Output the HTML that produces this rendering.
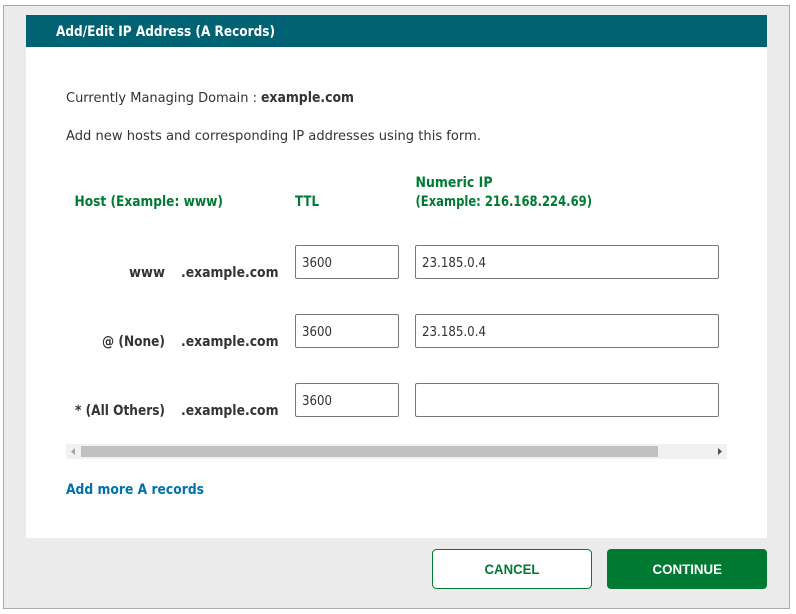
<!DOCTYPE html>
<html lang="en">
<head>
<meta charset="utf-8">
<title>Add/Edit IP Address</title>
<style>
html,body{margin:0;padding:0;width:796px;height:614px;background:#fff;overflow:hidden}
svg{display:block}
text{font-family:"DejaVu Sans","Liberation Sans",sans-serif;font-size:13.6px;fill:#333;white-space:pre}
.b{font-weight:700;font-size:13.8px}
.g{fill:#007a33;font-weight:700;font-size:13.8px}
.w{fill:#fff;font-weight:700;font-size:13.8px}
.l{fill:#0071ad;font-weight:700;font-size:13.8px}
.i{fill:#333;font-size:13px}
.btn{font-family:"Liberation Sans",sans-serif;font-weight:700;font-size:13.5px}
rect.f{fill:#fff;stroke:#777;stroke-width:1}
</style>
</head>
<body>
<svg width="796" height="614" viewBox="0 0 796 614" xmlns="http://www.w3.org/2000/svg">
<rect x="3.5" y="5.5" width="786" height="603" fill="#ebebeb" stroke="#aaa"/>
<rect x="26" y="47" width="741" height="491" fill="#fff"/>
<rect x="26" y="15" width="741" height="32" fill="#006272"/>
<text class="w" x="56" y="36" textLength="219" lengthAdjust="spacingAndGlyphs">Add/Edit IP Address (A Records)</text>

<text x="66" y="102" textLength="191" lengthAdjust="spacingAndGlyphs">Currently Managing Domain :</text>
<text class="b" x="261" y="102" textLength="93" lengthAdjust="spacingAndGlyphs">example.com</text>
<text x="66" y="140" textLength="415" lengthAdjust="spacingAndGlyphs">Add new hosts and corresponding IP addresses using this form.</text>

<text class="g" x="74.5" y="206" textLength="148.5" lengthAdjust="spacingAndGlyphs">Host (Example: www)</text>
<text class="g" x="295" y="206" textLength="24" lengthAdjust="spacingAndGlyphs">TTL</text>
<text class="g" x="415.5" y="187" textLength="77" lengthAdjust="spacingAndGlyphs">Numeric IP</text>
<text class="g" x="415.5" y="206" textLength="176.5" lengthAdjust="spacingAndGlyphs">(Example: 216.168.224.69)</text>

<text class="b" x="129" y="277" textLength="36" lengthAdjust="spacingAndGlyphs">www</text>
<text class="b" x="181" y="277" textLength="97.5" lengthAdjust="spacingAndGlyphs">.example.com</text>
<rect class="f" x="295.5" y="245.5" width="103" height="33" rx="1.5"/>
<text class="i" x="302" y="267" textLength="30" lengthAdjust="spacingAndGlyphs">3600</text>
<rect class="f" x="415.5" y="245.5" width="303" height="33" rx="1.5"/>
<text class="i" x="422" y="267" textLength="64" lengthAdjust="spacingAndGlyphs">23.185.0.4</text>

<text class="b" x="102" y="346" textLength="63" lengthAdjust="spacingAndGlyphs">@ (None)</text>
<text class="b" x="181" y="346" textLength="97.5" lengthAdjust="spacingAndGlyphs">.example.com</text>
<rect class="f" x="295.5" y="314.5" width="103" height="33" rx="1.5"/>
<text class="i" x="302" y="336" textLength="30" lengthAdjust="spacingAndGlyphs">3600</text>
<rect class="f" x="415.5" y="314.5" width="303" height="33" rx="1.5"/>
<text class="i" x="422" y="336" textLength="64" lengthAdjust="spacingAndGlyphs">23.185.0.4</text>

<text class="b" x="75" y="415" textLength="90" lengthAdjust="spacingAndGlyphs">* (All Others)</text>
<text class="b" x="181" y="415" textLength="97.5" lengthAdjust="spacingAndGlyphs">.example.com</text>
<rect class="f" x="295.5" y="383.5" width="103" height="33" rx="1.5"/>
<text class="i" x="302" y="405" textLength="30" lengthAdjust="spacingAndGlyphs">3600</text>
<rect class="f" x="415.5" y="383.5" width="303" height="33" rx="1.5"/>

<rect x="66" y="444" width="661" height="15" fill="#f1f1f1"/>
<rect x="81" y="446" width="577" height="11" fill="#c1c1c1"/>
<path d="M71 451.5L75 448V455Z" fill="#a3a3a3"/>
<path d="M722 451.5L718 448V455Z" fill="#505050"/>

<text class="l" x="66" y="494" textLength="138" lengthAdjust="spacingAndGlyphs">Add more A records</text>

<rect x="432.5" y="549.5" width="159" height="39" rx="4" fill="#fff" stroke="#007a33"/>
<text class="btn" x="484.5" y="574" textLength="55" lengthAdjust="spacingAndGlyphs" style="fill:#007a33">CANCEL</text>
<rect x="607" y="549" width="160" height="40" rx="4" fill="#007a33"/>
<text class="btn" x="652.5" y="574" textLength="69.5" lengthAdjust="spacingAndGlyphs" style="fill:#fff">CONTINUE</text>
</svg>
</body>
</html>
